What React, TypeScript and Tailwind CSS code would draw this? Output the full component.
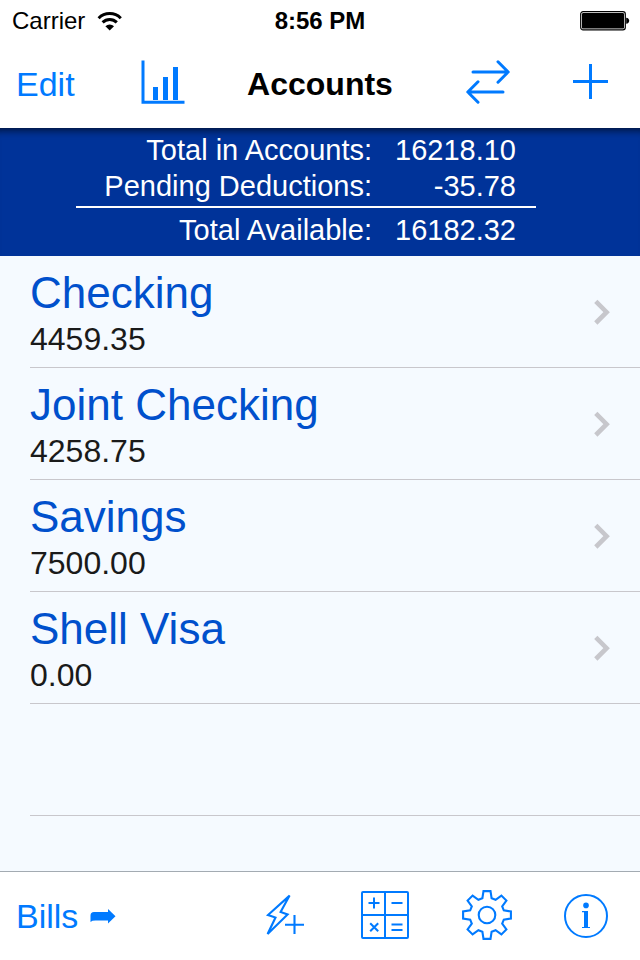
import type { ReactNode } from "react";

type Account = { name: string; balance: string };

const accounts: Account[] = [
  { name: "Checking", balance: "4459.35" },
  { name: "Joint Checking", balance: "4258.75" },
  { name: "Savings", balance: "7500.00" },
  { name: "Shell Visa", balance: "0.00" },
];

function IconButton({ label, className = "", children }: { label: string; className?: string; children: ReactNode }) {
  return (
    <button type="button" aria-label={label} className={`shrink-0 cursor-pointer ${className}`}>
      {children}
    </button>
  );
}

function StatusBar() {
  return (
    <div className="grid h-10 grid-cols-[1fr_auto_1fr] items-center pt-0.5 text-2xl leading-9">
      <div className="flex items-center gap-3 pl-3">
        <span>Carrier</span>
        <svg width="26" height="20" viewBox="0 0 26 20" fill="none" stroke="#000" strokeWidth="3" aria-hidden="true">
          <path d="M1.6 7.2a15.700 15.700 0 0 1 22.2 0" />
          <path d="M5.600 11.400a10.050 10.050 0 0 1 14.200 0" />
          <path d="M12.700 19.400 8.400 15.200a6.080 6.080 0 0 1 8.600 0Z" fill="#000" stroke="none" />
        </svg>
      </div>
      <span className="font-bold">8:56 PM</span>
      <div className="flex justify-end pr-[10px]">
        <svg width="50" height="20" viewBox="0 0 50 20" role="img" aria-label="Battery full">
          <rect x="0.7" y="0.7" width="44.6" height="18.2" rx="2.4" fill="none" stroke="#000" strokeWidth="1.2" />
          <rect x="2" y="2" width="42" height="15.6" rx="1.2" fill="#000" />
          <path d="M46.2 6.8c2 .3 3 1.400 3 3s-1 2.700-3 3Z" fill="#000" />
        </svg>
      </div>
    </div>
  );
}

function NavBar() {
  return (
    <header className="grid h-22 grid-cols-[1fr_auto_1fr] items-center text-[#007aff]">
      <div className="flex items-center justify-between pr-[62px] pl-4">
        <button type="button" className="cursor-pointer text-[34px] leading-11">
          Edit
        </button>
        <IconButton label="Reports" className="pb-1">
          <svg width="44" height="44" viewBox="0 0 44 44" fill="currentColor" className="block">
            <path d="M0.500 0.500h3v40.200h40v3H0.500Z" />
            <path d="M12 27h5v13h-5ZM22 17h5v23h-5ZM32 7h5v33h-5Z" />
          </svg>
        </IconButton>
      </div>
      <h1 className="text-[32px] leading-11 font-bold text-black">Accounts</h1>
      <div className="flex items-center justify-between pr-8 pl-[73px]">
        <IconButton label="Transfer" className="pb-1">
          <svg width="44" height="44" viewBox="0 0 44 44" fill="none" stroke="currentColor" strokeWidth="3" strokeLinecap="round" strokeLinejoin="round" className="block">
            <path d="M7 12H42M32 1.800 42.200 12 32 22.200" />
            <path d="M37 32H2M12 21.800 1.800 32 12 42.200" />
          </svg>
        </IconButton>
        <IconButton label="Add account" className="pb-1">
          <svg width="35" height="36" viewBox="0 0 35 36" fill="currentColor" className="block">
            <path d="M16 0h3v35h-3Z" />
            <path d="M0 16h35v3H0Z" />
          </svg>
        </IconButton>
      </div>
    </header>
  );
}

function Summary() {
  return (
    <section className="flex h-32 justify-center bg-[#003399] pt-1 pr-7 text-white shadow-[inset_0_10px_8px_-8px_rgba(0,0,0,0.7)]">
      <table className="w-[460px] table-fixed border-separate border-spacing-0 self-start text-right text-[29px] leading-9">
        <tbody>
          <tr>
            <th scope="row" className="w-[296px] p-0 font-normal">Total in Accounts:</th>
            <td className="p-0 pr-5">16218.10</td>
          </tr>
          <tr>
            <th scope="row" className="border-b-2 border-white p-0 pb-0.5 font-normal">Pending Deductions:</th>
            <td className="border-b-2 border-white p-0 pr-5 pb-0.5">-35.78</td>
          </tr>
          <tr>
            <th scope="row" className="p-0 pt-1 font-normal">Total Available:</th>
            <td className="p-0 pt-1 pr-5">16182.32</td>
          </tr>
        </tbody>
      </table>
    </section>
  );
}

function AccountRow({ name, balance }: Account) {
  return (
    <li className="pl-[30px]">
      <a href="#" className="flex h-28 items-center justify-between border-b border-[#c8c7cc] pr-[30px]">
        <span className="flex flex-col self-start pt-3">
          <span className="text-[44px] leading-[50px] text-[#0050cc]">{name}</span>
          <span className="text-[32px] leading-[42px] text-[#1a1a1a]">{balance}</span>
        </span>
        <svg width="16" height="26" viewBox="0 0 16 26" fill="none" stroke="#c7c7cc" strokeWidth="4.600" aria-hidden="true">
          <path d="M1.800 2.400 12.600 13.200 1.800 24" />
        </svg>
      </a>
    </li>
  );
}

function Toolbar() {
  return (
    <footer className="flex h-[89px] items-center justify-between border-t border-[#a3abb2] bg-white pr-8 pl-4 text-[#007aff]">
      <button type="button" className="flex cursor-pointer items-center gap-3 text-[34px] leading-11">
        <span>Bills</span>
        <svg width="26" height="15" viewBox="0 0 26 15" fill="currentColor" aria-hidden="true">
          <path d="M0.500 13V6.500Q0.500 3 4 3H18V0L25.500 7.200 18 14.400V11.600H5.500Q2 11.600 0.500 13Z" />
        </svg>
      </button>
      <div className="flex items-center gap-[52px]">
        <IconButton label="Quick add">
          <svg width="45" height="52" viewBox="264 890 45 52" fill="none" stroke="currentColor" strokeWidth="2.100" className="block">
            <path d="M289.600 895.600 268 915 275.500 917.500 267.600 934 287.600 914.500 280.600 912Z" />
            <path d="M294.500 915v19M285 924.800h19" />
          </svg>
        </IconButton>
        <IconButton label="Calculator">
          <svg width="49" height="52" viewBox="361 890 49 52" fill="none" stroke="currentColor" strokeWidth="2" className="block">
            <rect x="362" y="892" width="46" height="46" rx="1" />
            <path d="M385 892v46M362 915h46" />
            <path d="M374 897.500v11M368.500 903h11M391.500 903h11M370.200 923.200l8 8M378.200 923.200l-8 8M391.500 924.500h11M391.500 930h11" />
          </svg>
        </IconButton>
        <IconButton label="Settings">
          <svg width="50" height="52" viewBox="-25 -25 50 52" fill="none" stroke="currentColor" strokeWidth="2.100" className="block">
            <path d="M-3.500-23.900H3.500L4.600-16.800 8.600-15.200 14.400-19.400 19.400-14.400 15.200-8.600 16.800-4.600 23.900-3.500V3.500L16.800 4.600 15.200 8.600 19.400 14.400 14.400 19.400 8.600 15.200 4.600 16.800 3.500 23.900H-3.500L-4.600 16.800-8.600 15.200-14.400 19.400-19.400 14.400-15.200 8.600-16.800 4.600-23.900 3.500V-3.500L-16.800-4.600-15.200-8.600-19.400-14.400-14.400-19.400-8.600-15.200-4.600-16.800Z" />
            <circle r="8.300" />
          </svg>
        </IconButton>
        <IconButton label="Information">
          <svg width="44" height="52" viewBox="564 890 44 52" fill="none" stroke="currentColor" className="block">
            <circle cx="586" cy="916" r="21" strokeWidth="2" />
            <circle cx="586" cy="905.400" r="2.800" fill="currentColor" stroke="none" />
            <path d="M586 911v16" strokeWidth="4" />
            <path d="M582 911.600h4M582 927.500h8" strokeWidth="1.200" />
          </svg>
        </IconButton>
      </div>
    </footer>
  );
}

export default function App() {
  return (
    <div className="flex min-h-screen flex-col bg-white font-['Liberation_Sans',Arial,sans-serif] text-black">
      <StatusBar />
      <NavBar />
      <Summary />
      <main className="flex-1 bg-[#f5faff]">
        <ul>
          {accounts.map((account) => (
            <AccountRow key={account.name} {...account} />
          ))}
        </ul>
        <div className="ml-[30px] h-28 border-b border-[#c8c7cc]" />
      </main>
      <Toolbar />
    </div>
  );
}
